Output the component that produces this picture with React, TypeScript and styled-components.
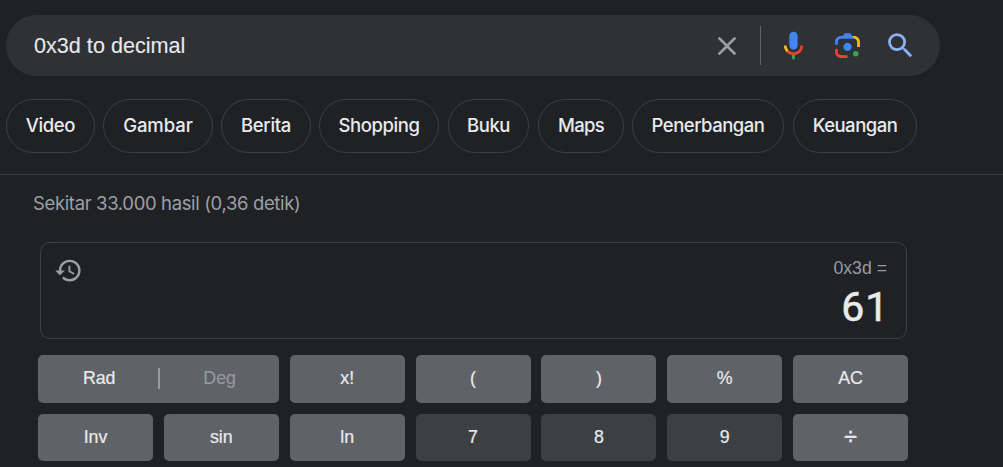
import React from "react";
import styled, { createGlobalStyle } from "styled-components";

const GlobalStyle = createGlobalStyle`
  * { box-sizing: border-box; }
  body {
    margin: 0;
    background: #202124;
    color: #e8eaed;
    font-family: "Liberation Sans", Arial, sans-serif;
    overflow: hidden;
  }
`;

const Page = styled.div`
  height: 467px;
  padding-top: 15px;
  overflow: hidden;
`;

const SearchBar = styled.div`
  display: flex;
  align-items: center;
  width: 934px;
  height: 61px;
  margin-left: 6px;
  padding: 0 23px 0 28px;
  border-radius: 31px;
  background: #303134;
`;

const Query = styled.span`
  flex: 1;
  font-size: 21.6px;
  line-height: 28px;
  letter-spacing: 0.01px;
  color: #e8eaed;
  -webkit-text-stroke: 0.1px #e8eaed;
`;

const Icon = styled.svg<{ $size: number; $gap?: number }>`
  display: block;
  flex: none;
  width: ${(p) => p.$size}px;
  height: ${(p) => p.$size}px;
  margin-left: ${(p) => p.$gap ?? 0}px;
`;

const BarDivider = styled.div`
  width: 1px;
  height: 39px;
  margin-left: 17px;
  background: #5f6368;
`;

const Chips = styled.nav`
  display: flex;
  margin: 23px 0 0 6px;
`;

const Chip = styled.a<{ $width: number; $gap: number; $spacing: number }>`
  display: flex;
  align-items: center;
  justify-content: center;
  flex: none;
  width: ${(p) => p.$width}px;
  height: 54px;
  margin-right: ${(p) => p.$gap}px;
  padding-bottom: 2px;
  border: 1px solid #3c4043;
  border-radius: 27px;
  font: 500 18.5px/24px Inter, sans-serif;
  letter-spacing: ${(p) => p.$spacing}px;
  color: #e8eaed;
  white-space: nowrap;
`;

const Rule = styled.hr`
  height: 1px;
  margin: 21px 0 0;
  border: 0;
  background: #3c4043;
`;

const Stats = styled.div`
  margin: 15px 0 0 33px;
  font: 400 18.5px/26px Inter, sans-serif;
  letter-spacing: -0.36px;
  color: #9aa0a6;
`;

const Display = styled.section`
  display: flex;
  justify-content: space-between;
  width: 867px;
  height: 97px;
  margin: 26px 0 0 40px;
  padding: 13px 19px 0 13px;
  border: 1px solid #3c4043;
  border-radius: 10px;
`;

const Readout = styled.div`
  display: flex;
  flex-direction: column;
  align-items: flex-end;
`;

const Expression = styled.span`
  font-size: 17.7px;
  line-height: 24px;
  color: #969ba1;
`;

const Result = styled.span`
  margin: 3px -2px 0 0;
  font: 400 41px/48px Roboto, sans-serif;
  letter-spacing: 0.8px;
  color: #e8eaed;
  -webkit-text-stroke: 0.6px #e8eaed;
`;

const Keypad = styled.div`
  display: grid;
  grid-template-columns: repeat(7, 115px);
  grid-template-rows: 48px 47px;
  justify-content: space-between;
  row-gap: 11px;
  width: 870.1px;
  margin: 16px 0 0 38px;
`;

const Key = styled.div<{ $digit?: boolean; $large?: boolean }>`
  display: flex;
  align-items: center;
  justify-content: center;
  padding-bottom: 2px;
  border-radius: 5px;
  background: ${(p) => (p.$digit ? "#3c4043" : "#5f6368")};
  color: #e8eaed;
  font-size: ${(p) => (p.$large ? 23 : 17.8)}px;
  line-height: 22px;
  -webkit-text-stroke: ${(p) => (p.$large ? 0.5 : 0.2)}px currentColor;
`;

const AngleKey = styled(Key)`
  grid-column: span 2;
`;

const AngleMode = styled.span<{ $active?: boolean }>`
  flex: 1;
  padding-left: ${(p) => (p.$active ? 2 : 0)}px;
  text-align: center;
  color: ${(p) => (p.$active ? "#e8eaed" : "#969ba1")};
  -webkit-text-stroke-width: ${(p) => (p.$active ? 0.2 : 0)}px;
`;

const AngleDivider = styled.span`
  width: 2px;
  height: 21px;
  background: #969ba1;
`;

const chips = [
  { label: "Video", width: 89, gap: 8, spacing: -0.4 },
  { label: "Gambar", width: 110, gap: 8, spacing: -0.05 },
  { label: "Berita", width: 90, gap: 8, spacing: -0.3 },
  { label: "Shopping", width: 120, gap: 9, spacing: -0.4 },
  { label: "Buku", width: 81, gap: 9, spacing: -0.5 },
  { label: "Maps", width: 86, gap: 8, spacing: -0.7 },
  { label: "Penerbangan", width: 152, gap: 9, spacing: -0.5 },
  { label: "Keuangan", width: 124, gap: 0, spacing: -0.5 },
];

const keys = ["x!", "(", ")", "%", "AC", "Inv", "sin", "ln", "7", "8", "9", "÷"];

export default function App() {
  return (
    <>
      <GlobalStyle />
      <Page>
        <SearchBar>
          <Query>0x3d to decimal</Query>
          <Icon $size={32} viewBox="0 0 24 24" fill="#9aa0a6">
            <path d="M19 6.41L17.59 5 12 10.59 6.41 5 5 6.41 10.59 12 5 17.59 6.41 19 12 13.41 17.59 19 19 17.59 13.41 12z" />
          </Icon>
          <BarDivider />
          <Icon $size={33} $gap={16} viewBox="0 0 24 24">
            <path fill="#4285f4" d="M12 15c1.66 0 3-1.31 3-2.97V5.01C15 3.35 13.66 2 12 2S9 3.34 9 5.01v7.02C9 13.69 10.34 15 12 15z" />
            <path fill="#34a853" d="M11 18.08h2V22h-2z" />
            <path fill="#fbbc04" d="M7.05 16.87C5.78 15.54 5 14.04 5 12h2c0 1.45.56 2.42 1.47 3.38v.32l-1.15 1.18z" />
            <path fill="#ea4335" d="M12 16.93a4.97 5.25 0 0 1-3.54-1.55l-1.41 1.49C8.31 18.21 10.07 19 12 19c3.87 0 6.99-2.92 6.99-7H17c0 2.92-2.24 4.93-5 4.93z" />
          </Icon>
          <Icon $size={33} $gap={21} viewBox="0 0 192 192">
            <circle fill="#34a853" cx="144.07" cy="144" r="16" />
            <circle fill="#4285f4" cx="96.07" cy="104" r="24" />
            <path fill="#ea4335" d="M24 135.2c0 18.11 14.69 32.8 32.8 32.8H96v-16l-40.1-.1c-8.8 0-15.9-8.19-15.9-17.9v-18H24z" />
            <path fill="#fbbc04" d="M168 72.8c0-18.11-14.69-32.8-32.8-32.8H116l20 16c8.8 0 16 8.29 16 18v30h16z" />
            <path fill="#4285f4" d="M112 24H80L68 40H56.8C38.69 40 24 54.69 24 72.8V92h16V74c0-9.71 7.2-18 16-18h80l-12-16z" />
          </Icon>
          <Icon $size={33} $gap={20} viewBox="0 0 24 24" fill="#8ab4f8">
            <path d="M15.5 14h-.79l-.28-.27A6.471 6.471 0 0 0 16 9.5 6.5 6.5 0 1 0 9.5 16c1.61 0 3.09-.59 4.23-1.57l.27.28v.79l5 4.99L20.49 19l-4.99-5zm-6 0C7.01 14 5 11.99 5 9.5S7.01 5 9.5 5 14 7.01 14 9.5 11.99 14 9.5 14z" />
          </Icon>
        </SearchBar>

        <Chips>
          {chips.map((c) => (
            <Chip key={c.label} $width={c.width} $gap={c.gap} $spacing={c.spacing}>
              {c.label}
            </Chip>
          ))}
        </Chips>
        <Rule />
        <Stats>Sekitar 33.000 hasil (0,36 detik)</Stats>

        <Display>
          <Icon $size={29} $gap={0.3} viewBox="0 0 24 24" fill="#9aa0a6">
            <path d="M13 3a9 9 0 0 0-9 9H1l3.89 3.89.07.14L9 12H6c0-3.87 3.13-7 7-7s7 3.13 7 7-3.13 7-7 7c-1.93 0-3.68-.79-4.94-2.06l-1.42 1.42A8.954 8.954 0 0 0 13 21a9 9 0 0 0 0-18zm-1 5v5l4.28 2.54.72-1.21-3.5-2.08V8H12z" />
          </Icon>
          <Readout>
            <Expression>0x3d =</Expression>
            <Result>61</Result>
          </Readout>
        </Display>

        <Keypad>
          <AngleKey>
            <AngleMode $active>Rad</AngleMode>
            <AngleDivider />
            <AngleMode>Deg</AngleMode>
          </AngleKey>
          {keys.map((k) => (
            <Key key={k} $digit={/\d/.test(k)} $large={k === "÷"}>
              {k}
            </Key>
          ))}
        </Keypad>
      </Page>
    </>
  );
}
